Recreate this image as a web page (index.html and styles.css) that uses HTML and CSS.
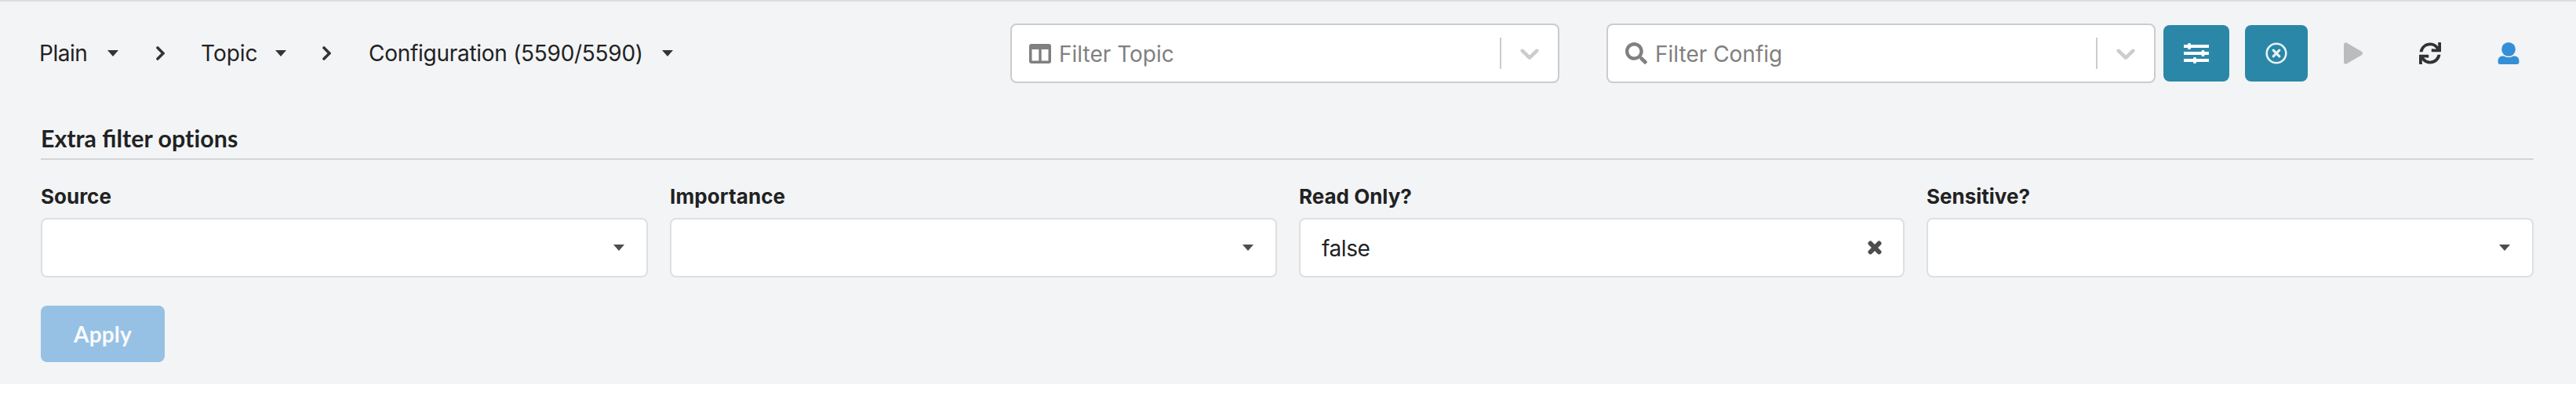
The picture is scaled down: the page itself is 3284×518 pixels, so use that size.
FILE: index.html
```html
<!DOCTYPE html>
<html lang="en">
<head>
<meta charset="utf-8">
<title>Configuration</title>
<link rel="stylesheet" href="styles.css">
</head>
<body>
<main class="panel">
  <header class="toolbar">
    <nav class="crumbs">
      <span class="crumb crumb-plain">Plain</span>
      <svg class="caret" viewBox="0 0 14 8"><path d="M0 0H14L7 8Z"/></svg>
      <svg class="chevron" viewBox="0 0 11 18"><path d="M2 2L9 9L2 16"/></svg>
      <span class="crumb crumb-topic">Topic</span>
      <svg class="caret" viewBox="0 0 14 8"><path d="M0 0H14L7 8Z"/></svg>
      <svg class="chevron chevron-last" viewBox="0 0 11 18"><path d="M2 2L9 9L2 16"/></svg>
      <span class="crumb crumb-config">Configuration (5590/5590)</span>
      <svg class="caret" viewBox="0 0 14 8"><path d="M0 0H14L7 8Z"/></svg>
    </nav>
    <div class="select">
      <svg class="select-icon" viewBox="0 0 28 28"><path fill-rule="evenodd" d="M3 2H25Q28 2 28 5V24Q28 27 25 27H3Q0 27 0 24V5Q0 2 3 2ZM3.500 9V23.500H12.300V9ZM15.700 9V23.500H24.500V9Z"/></svg>
      <span class="placeholder">Filter Topic</span>
      <span class="separator"></span>
      <svg class="indicator" viewBox="0 0 20 20"><path d="M4.516 7.548c0.436-0.446 1.043-0.481 1.576 0l3.908 3.747 3.908-3.747c0.533-0.481 1.141-0.446 1.574 0 0.436 0.445 0.408 1.197 0 1.615-0.406 0.418-4.695 4.502-4.695 4.502-0.217 0.223-0.502 0.335-0.787 0.335s-0.570-0.112-0.789-0.335c0 0-4.287-4.084-4.695-4.502s-0.436-1.170 0-1.615z"/></svg>
    </div>
    <div class="select">
      <svg class="select-icon" viewBox="0 0 512 512"><path d="M505 442.700L405.300 343c-4.500-4.500-10.600-7-17-7H372c27.600-35.300 44-79.700 44-128C416 93.100 322.900 0 208 0S0 93.100 0 208s93.100 208 208 208c48.300 0 92.700-16.400 128-44v16.300c0 6.400 2.500 12.500 7 17l99.700 99.700c9.400 9.400 24.600 9.400 33.900 0l28.300-28.300c9.400-9.400 9.400-24.600.1-34zM208 336c-70.700 0-128-57.200-128-128 0-70.700 57.200-128 128-128 70.700 0 128 57.200 128 128 0 70.700-57.200 128-128 128z"/></svg>
      <span class="placeholder">Filter Config</span>
      <span class="separator"></span>
      <svg class="indicator" viewBox="0 0 20 20"><path d="M4.516 7.548c0.436-0.446 1.043-0.481 1.576 0l3.908 3.747 3.908-3.747c0.533-0.481 1.141-0.446 1.574 0 0.436 0.445 0.408 1.197 0 1.615-0.406 0.418-4.695 4.502-4.695 4.502-0.217 0.223-0.502 0.335-0.787 0.335s-0.570-0.112-0.789-0.335c0 0-4.287-4.084-4.695-4.502s-0.436-1.170 0-1.615z"/></svg>
    </div>
    <button class="tool tool-options" aria-label="Options"><svg class="sliders" viewBox="0 0 32 26"><path d="M0 2h5V1.500a1.500 1.500 0 0 1 1.500-1.500h1a1.500 1.500 0 0 1 1.500 1.500V2h23v4H9v.500A1.500 1.500 0 0 1 7.500 8h-1A1.500 1.500 0 0 1 5 6.500V6H0zM0 11h22.500v-.500a1.500 1.500 0 0 1 1.500-1.500h1a1.500 1.500 0 0 1 1.500 1.500v.500H32v4h-5.500v.500A1.500 1.500 0 0 1 25 17h-1a1.500 1.500 0 0 1-1.500-1.500V15H0zM0 20h12v-.500a1.500 1.500 0 0 1 1.500-1.500h1a1.500 1.500 0 0 1 1.500 1.500v.500h16v4H16v.500a1.500 1.500 0 0 1-1.500 1.500h-1a1.500 1.500 0 0 1-1.500-1.500V24H0z"/></svg></button>
    <button class="tool tool-clear" aria-label="Clear"><svg class="circle-x" viewBox="0 0 28 28"><circle cx="14" cy="14" r="12.300"/><path class="cross" d="M10.200 10.200L17.800 17.800M17.800 10.200L10.200 17.800"/></svg></button>
    <svg class="action play" viewBox="0 0 448 512"><path d="M424.400 214.700L72.400 6.600C43.800-10.300 0 6.100 0 47.900V464c0 37.500 40.700 60.100 72.400 41.300l352-208c31.400-18.500 31.500-64.100 0-82.600z"/></svg>
    <svg class="action refresh" viewBox="0 0 512 512"><path d="M440.650 12.570l4 82.770A247.160 247.160 0 0 0 255.830 8C134.730 8 33.910 94.920 12.290 209.820A12 12 0 0 0 24.090 224h49.050a12 12 0 0 0 11.670-9.260 175.910 175.910 0 0 1 317-56.940l-101.460-4.860a12 12 0 0 0-12.570 12v47.410a12 12 0 0 0 12 12H500a12 12 0 0 0 12-12V12a12 12 0 0 0-12-12h-47.370a12 12 0 0 0-11.980 12.570zM255.830 432a175.610 175.610 0 0 1-146-77.800l101.800 4.870a12 12 0 0 0 12.570-12v-47.400a12 12 0 0 0-12-12H12a12 12 0 0 0-12 12V500a12 12 0 0 0 12 12h47.350a12 12 0 0 0 12-12.600l-4.150-82.570A247.170 247.170 0 0 0 255.830 504c121.110 0 221.930-86.920 243.550-201.820a12 12 0 0 0-11.800-14.180h-49.050a12 12 0 0 0-11.670 9.260A175.860 175.860 0 0 1 255.830 432z"/></svg>
    <svg class="action user" viewBox="0 0 28 29"><circle cx="14" cy="9.200" r="9.200"/><path d="M5.500 18.200H7.500Q14 21.500 20.500 18.200H22.500Q28 19.200 28 25V26.500Q28 29 25.500 29H2.500Q0 29 0 26.500V25Q0 19.200 5.500 18.200Z"/></svg>
  </header>
  <section class="filters">
    <h4 class="title">Extra filter <span class="plain-letters">options</span></h4>
    <div class="fields">
      <div class="field"><label class="label">Source</label><div class="dropdown"><svg class="caret" viewBox="0 0 14 8"><path d="M0 0H14L7 8Z"/></svg></div></div>
      <div class="field"><label class="label label-importance">Importance</label><div class="dropdown"><svg class="caret" viewBox="0 0 14 8"><path d="M0 0H14L7 8Z"/></svg></div></div>
      <div class="field"><label class="label">Read Only?</label><div class="dropdown dropdown-filled"><span class="value">false</span><svg class="times" viewBox="0 0 18 18"><path d="M3.500 3.500L14.500 14.500M14.500 3.500L3.500 14.500"/></svg></div></div>
      <div class="field"><label class="label">Sensitive?</label><div class="dropdown"><svg class="caret" viewBox="0 0 14 8"><path d="M0 0H14L7 8Z"/></svg></div></div>
    </div>
    <button class="apply">Apply</button>
  </section>
</main>
</body>
</html>
```
FILE: styles.css
```css
* { box-sizing: border-box; }
body {
  margin: 0;
  background: #fff;
  color: #212222;
  font: 28px/40px Inter, "Liberation Sans", sans-serif;
}
button { border: 0; padding: 0; font: inherit; }
svg { display: block; flex: none; }

.panel {
  height: 490px;
  background: #f3f4f6;
  border-top: 2px solid #dcddde;
}

.toolbar {
  display: flex;
  align-items: center;
  height: 132px;
  padding-left: 50px;
}
.crumbs { display: flex; align-items: center; width: 1238px; }
.crumb { white-space: nowrap; }
.crumb-plain { width: 87px; letter-spacing: -0.500px; }
.crumb-topic { width: 95px; }
.crumb-config { width: 374px; letter-spacing: -0.280px; }
.caret { width: 14px; height: 8px; fill: #343434; }
.chevron { width: 11px; height: 18px; margin: 0 46px 0 48px; fill: none; stroke: #343434; stroke-width: 3.600; stroke-linecap: round; }
.chevron-last { margin: 0 48px 0 46px; }

.select {
  display: flex;
  align-items: center;
  flex: none;
  width: 700px;
  height: 76px;
  margin-right: 60px;
  padding: 0 16px 0 22px;
  background: #fff;
  border: 2px solid #ccc;
  border-radius: 8px;
}
.select + .tool { margin-left: -50px; }
.select-icon { width: 28px; height: 28px; fill: #808080; }
.placeholder { flex: 1; padding: 2px 0 0 10px; color: #808080; white-space: nowrap; }
.separator { width: 2px; height: 40px; margin-right: 16px; background: #ccc; }
.indicator { width: 40px; height: 40px; fill: #ccc; }

.tool {
  display: flex;
  align-items: center;
  justify-content: center;
  flex: none;
  height: 72px;
  border-radius: 8px;
  background: #2b87a8;
}
.tool-options { width: 84px; }
.tool-clear { width: 80px; margin-left: 20px; }
.sliders { width: 32px; height: 26px; fill: #fff; }
.circle-x { width: 28px; height: 28px; fill: none; stroke: #e9f3f6; stroke-width: 2.600; }
.cross { stroke-width: 3.200; stroke-linecap: round; }
.action { height: 28px; }
.play { width: 24px; margin-left: 46px; fill: #bbbdbd; }
.refresh { width: 28px; margin-left: 72px; fill: #333; }
.user { width: 28px; margin-left: 72px; fill: #358fd6; }

.filters { padding: 22px 54px 0 52px; }
.title {
  height: 48px;
  margin: 0;
  border-bottom: 2px solid #d4d5d7;
  font: 700 30.300px/41px Lato, sans-serif;
}
.plain-letters { font-variant-ligatures: none; letter-spacing: 0.100px; }
.fields { display: grid; grid-template-columns: 774fr 774fr 772fr 774fr; gap: 28px; padding-top: 28px; }
.label { display: block; height: 46px; font-size: 26px; font-weight: 700; line-height: 38px; }
.label-importance { letter-spacing: 0.100px; }
.dropdown {
  display: flex;
  align-items: center;
  justify-content: flex-end;
  height: 76px;
  padding: 0 28px;
  background: #fff;
  border: 2px solid #dedfdf;
  border-radius: 8px;
}
.dropdown-filled { padding: 0 27px; }
.dropdown .caret { fill: #4d4d4d; }
.value { flex: 1; padding-top: 1px; letter-spacing: -0.400px; }
.times { width: 18px; height: 18px; fill: none; stroke: #4d4d4d; stroke-width: 6; stroke-linecap: round; }
.apply {
  display: block;
  width: 158px;
  height: 72px;
  margin-top: 36px;
  border-radius: 8px;
  background: #96c1e4;
  color: #f9fafc;
  font: 700 28px/70px Lato, sans-serif;
  letter-spacing: 0.200px;
}
```
